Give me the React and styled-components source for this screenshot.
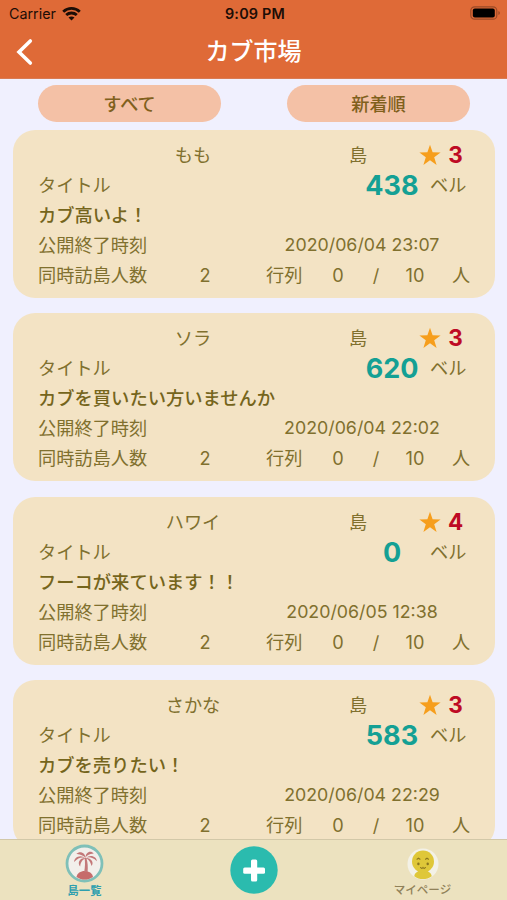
import React from 'react'
import styled, { createGlobalStyle } from 'styled-components'

let GlobalStyle = createGlobalStyle`
  * { box-sizing: border-box; }
  body {
    margin: 0;
    background-color: #F0F0FE;
    font-family: Inter, "Noto Sans CJK JP", sans-serif;
  }
`

let Screen = styled.div`
  width: 507px;
  height: 900px;
  display: flex;
  flex-direction: column;
  overflow: hidden;
  background-color: #F0F0FE;
`

let Header = styled.header`
  flex: none;
  height: 79px;
  background-color: #DF6A37;
  border-bottom: 1px solid #D97B54;
`

let StatusBar = styled.div`
  display: grid;
  grid-template-columns: 1fr auto 1fr;
  align-items: center;
  height: 27px;
  padding: 0 6px 0 9px;
  font-size: 14px;
  color: #1C0D06;
`

let Carrier = styled.div`
  display: flex;
  align-items: center;
  gap: 6px;
  font-size: 14.3px;
`

let Clock = styled.div`
  font-size: 14.4px;
  font-weight: 600;
  letter-spacing: 0.2px;
`

let Battery = styled.svg`
  justify-self: end;
  margin-bottom: 1px;
`

let TitleBar = styled.div`
  display: grid;
  grid-template-columns: 40px 1fr 40px;
  align-items: center;
  height: 50px;
`

let BackIcon = styled.svg`
  margin-left: 15px;
`

let PageTitle = styled.h1`
  margin: 0;
  text-align: center;
  font-size: 24px;
  line-height: 48px;
  font-weight: 500;
  color: #FFF;
`

let Filters = styled.div`
  flex: none;
  display: flex;
  justify-content: space-between;
  height: 51px;
  padding: 6px 37px 0 38px;
`

let FilterButton = styled.button`
  width: 183px;
  height: 37px;
  padding: 0 0 2px;
  border: 0;
  border-radius: 19px;
  background-color: #F4C1A6;
  color: #80601C;
  font-family: inherit;
  font-size: 18.2px;
  font-weight: 500;
`

let List = styled.ul`
  flex: 1;
  min-height: 0;
  overflow: hidden;
  margin: 0;
  padding: 0 12px 0 13px;
  list-style: none;
`

let Card = styled.li`
  height: 168px;
  margin-bottom: 15.4px;
  padding: 10px 0 0 25px;
  border-radius: 22px;
  background-color: #F3E3C4;
  color: #80702E;
  font-size: 18.2px;
`

let Row = styled.div`
  display: grid;
  grid-template-columns: ${props => props.$columns};
  align-items: center;
  height: 30px;
  line-height: 30px;
  white-space: nowrap;
`

let Value = styled.span`
  text-align: center;
`

let EndTime = styled(Value)`
  font-size: 17.8px;
`

let Comment = styled.span`
  font-size: 18.3px;
  font-weight: 500;
  color: #75651C;
`

let Star = styled.svg`
  display: block;
`

let Rating = styled(Value)`
  padding-right: 1px;
  font-size: 22.5px;
  font-weight: 700;
  color: #BE0A24;
`

let Price = styled(Value)`
  padding-top: 2px;
  font-size: 27px;
  line-height: 28px;
  font-weight: 700;
  color: #14A094;
`

let TabBar = styled.nav`
  flex: none;
  display: grid;
  grid-template-columns: repeat(3, 1fr);
  height: 61px;
  border-top: 1px solid #D2C8A8;
  background-color: #ECE2BF;
`

let Tab = styled.div`
  display: flex;
  flex-direction: column;
  align-items: center;
  padding-top: ${props => props.$top};
`

let TabLabel = styled.span`
  margin-top: ${props => props.$active ? '1px' : '3px'};
  font-size: ${props => props.$active ? '11.3px' : '11.5px'};
  line-height: 15px;
  font-weight: ${props => props.$active ? 700 : 500};
  color: ${props => props.$active ? '#2D9FAE' : '#908159'};
`

let islands = [
  { name: 'もも', rating: 3, price: 438, comment: 'カブ高いよ！', ends: '2020/06/04 23:07' },
  { name: 'ソラ', rating: 3, price: 620, comment: 'カブを買いたい方いませんか', ends: '2020/06/04 22:02' },
  { name: 'ハワイ', rating: 4, price: 0, comment: 'フーコが来ています！！', ends: '2020/06/05 12:38' },
  { name: 'さかな', rating: 3, price: 583, comment: 'カブを売りたい！', ends: '2020/06/04 22:29' },
]

let WifiIcon = () => (
  <svg width="19" height="14" viewBox="0 0 19 14" fill="none" stroke="#1C0D06" strokeWidth="2.8">
    <path d="M1.2 4.8C6 .3 13 .3 17.8 4.8" />
    <path d="M4.2 8.1c3-2.8 7.6-2.8 10.6 0" />
    <path d="M9.5 13.5 6.5 10.5c1.7-1.5 4.3-1.5 6 0z" fill="#1C0D06" stroke="none" />
  </svg>
)

let PalmIcon = () => (
  <svg width="39" height="39" viewBox="0 0 39 39">
    <circle cx="19.5" cy="19.5" r="17.5" fill="#F2EFEB" stroke="#7FC0B8" strokeWidth="2.8" />
    <path d="M11.5 33c.6-3.8 4-6 8.2-6s7.8 2.2 8.3 6c-5 3.4-11.5 3.4-16.5 0z" fill="#C66C6B" />
    <g fill="#C37879">
      <path d="M19.6 14h1.8c1.4 4.5 1.6 9 1.2 14h-3.4c.9-5 1.1-9.5.4-14z" />
      <path d="M20.5 14.5C18 12.5 13.5 13 9.2 18c-.6-4.5 6.5-8.5 11.3-3.5z" />
      <path d="M20.5 14.5c2.5-2 7-1.5 11.3 2.7.2-4.5-6.8-7.8-11.3-2.7z" />
      <path d="M20.5 14c-1.5 1-5 3-5.3 8.5-3.2-3.5-.5-8.8 5.3-8.5z" />
      <path d="M20.5 14c2 1 5 2.8 6 8 3-3.5-.5-8.5-6-8z" />
      <path d="M20.5 14c-1.5-2.2-4-3.2-9.2-4.2 3.5-3.3 9-1.4 9.2 4.2z" />
      <path d="M20.5 14c.8-2.5 3.5-4 8.3-4.5-3-3.8-8.5-1.5-8.3 4.5z" />
    </g>
  </svg>
)

let AddIcon = () => (
  <svg width="48" height="48" viewBox="0 0 48 48">
    <circle cx="24" cy="24" r="23.7" fill="#2BBBAE" />
    <g fill="#FFF">
      <rect x="21" y="13.5" width="6.2" height="22" rx="1.5" />
      <rect x="13.2" y="21.5" width="21.8" height="6.2" rx="1.5" />
    </g>
  </svg>
)

let FaceIcon = () => (
  <svg width="32" height="32" viewBox="0 0 32 32">
    <circle cx="16" cy="16" r="15.5" fill="#F3F1E7" />
    <path d="M12 21h8c0 3.3 4.6 3.2 4.7 7.2-5 3.8-12.6 3.8-17.4 0C7.4 24.2 12 24.3 12 21z" fill="#DFC739" />
    <circle cx="16" cy="13.5" r="11" fill="#DFC739" />
    <g fill="none" stroke="#8A751F" strokeLinecap="round">
      <path d="M10 11.2l1.5-1 1.5 1M18.5 11.2l1.5-1 1.5 1M13.6 19.5q1.2 1.8 2.4 0 1.2 1.8 2.4 0" strokeWidth="1.1" />
      <path d="M11.4 15.7v.4M20.7 15.7v.4" strokeWidth="2.4" />
    </g>
  </svg>
)

let Island = ({ island }) => <Card>
  <Row $columns="310px 20px 51px 22px 30px">
    <Value>{island.name}</Value>
    <Value>島</Value>
    <span />
    <Star width="22" height="22" viewBox="0 0 22 22">
      <path d="M11 .8l2.6 7.5 8 .1-6.4 4.8 2.4 7.8-6.6-4.7L4.4 21l2.4-7.8L.4 8.4l8-.1z" fill="#F69E1C" />
    </Star>
    <Rating>{island.rating}</Rating>
  </Row>
  <Row $columns="316px 76px auto">
    <span>タイトル</span>
    <Price>{island.price}</Price>
    <span>ベル</span>
  </Row>
  <Row $columns="auto">
    <Comment>{island.comment}</Comment>
  </Row>
  <Row $columns="244px 160px">
    <span>公開終了時刻</span>
    <EndTime>{island.ends}</EndTime>
  </Row>
  <Row $columns="147px 40px 41px 52px 40px 36px 42px 50px">
    <span>同時訪島人数</span>
    <Value>2</Value>
    <span />
    <span>行列</span>
    <Value>0</Value>
    <Value>/</Value>
    <Value>10</Value>
    <Value>人</Value>
  </Row>
</Card>

let App = () => <React.Fragment>
  <GlobalStyle />
  <Screen>
    <Header>
      <StatusBar>
        <Carrier>Carrier <WifiIcon /></Carrier>
        <Clock>9:09 PM</Clock>
        <Battery width="31" height="14" viewBox="0 0 31 14">
          <rect x=".8" y=".8" width="26" height="12.4" rx="3.8" fill="none" stroke="#9B4A27" strokeWidth="1.2" />
          <rect x="2.8" y="2.6" width="22" height="8.8" rx="2" fill="#000" />
          <path d="M28.4 5v4c2-.8 2-3.2 0-4z" fill="#9B4A27" />
        </Battery>
      </StatusBar>
      <TitleBar>
        <BackIcon width="18" height="28" viewBox="0 0 18 28">
          <path d="M15.3 3 4 14l11.3 11" fill="none" stroke="#FFF" strokeWidth="3.6" strokeLinecap="round" />
        </BackIcon>
        <PageTitle>カブ市場</PageTitle>
      </TitleBar>
    </Header>
    <Filters>
      <FilterButton>すべて</FilterButton>
      <FilterButton>新着順</FilterButton>
    </Filters>
    <List>
      {islands.map(island => <Island key={island.name} island={island} />)}
    </List>
    <TabBar>
      <Tab $top="4px">
        <PalmIcon />
        <TabLabel $active>島一覧</TabLabel>
      </Tab>
      <Tab $top="6px">
        <AddIcon />
      </Tab>
      <Tab $top="8px">
        <FaceIcon />
        <TabLabel>マイページ</TabLabel>
      </Tab>
    </TabBar>
  </Screen>
</React.Fragment>

export default App
